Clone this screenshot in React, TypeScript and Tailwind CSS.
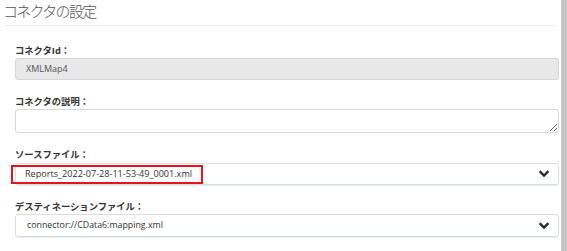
const font = { fontFamily: '"Open Sans", "Noto Sans CJK JP", sans-serif' };

function Chevron() {
  return (
    <svg width="10" height="8" viewBox="0 0 10 8" className="shrink-0">
      <path d="M1.5 2 L5 5.5 L8.5 2" fill="none" stroke="#2b2b2b" strokeWidth="2.4" strokeLinecap="square" />
    </svg>
  );
}

function Field({ label, children, className }: { label: string; children: React.ReactNode; className?: string }) {
  return (
    <div className={className}>
      <div className="h-[14px] leading-[14px] text-[9.3px] font-bold text-[#333]">{label}</div>
      {children}
    </div>
  );
}

export default function App() {
  return (
    <div className="flex w-[567px] h-[251px] bg-white overflow-hidden" style={font}>
      <div className="flex-1 flex flex-col">
        <div className="mx-[5px] h-[26px] border-b border-[#eeeeee]">
          <h1 className="-ml-[2px] pt-[2px] text-[15px] tracking-[-1.7px] leading-[19px] font-light text-[#555]">コネクタの設定</h1>
        </div>
        <div className="pl-[15px] pr-[2px]">
          <Field label="コネクタId：" className="mt-[18px]">
            <div className="h-[22px] flex items-center px-[10px] bg-[#e8e8e8] border border-[#d6d6d6] rounded-[3px] text-[9px] text-[#555]">
              XMLMap4
            </div>
          </Field>
          <Field label="コネクタの説明：" className="mt-[15px]">
            <textarea
              readOnly
              className="block w-full h-[24px] min-h-[24px] border border-[#d9d9d9] rounded-[3px] bg-white outline-none"
            />
          </Field>
          <Field label="ソースファイル：" className="mt-[15px]">
            <div className="relative mt-[1px] h-[22px] flex items-center justify-between pl-[9px] pr-[9px] border border-[#dddddd] shadow-[0_1px_0_#e4edf5] rounded-[3px] text-[9.1px] text-[#333]">
              <span>Reports_2022-07-28-11-53-49_0001.xml</span>
              <Chevron />
              <div className="absolute left-[-5px] top-[1px] w-[192px] h-[19px] border-2 border-[#e8141b]" />
            </div>
          </Field>
          <Field label="デスティネーションファイル：" className="mt-[15px]">
            <div className="h-[23px] flex items-center justify-between pl-[11px] pr-[9px] border border-[#dddddd] shadow-[0_1px_0_#e4edf5] rounded-[3px] text-[8.8px] text-[#333]">
              <span>connector://CData6:mapping.xml</span>
              <Chevron />
            </div>
          </Field>
        </div>
      </div>
      <div className="w-[6px] bg-[#c4c4c4]" />
    </div>
  );
}
